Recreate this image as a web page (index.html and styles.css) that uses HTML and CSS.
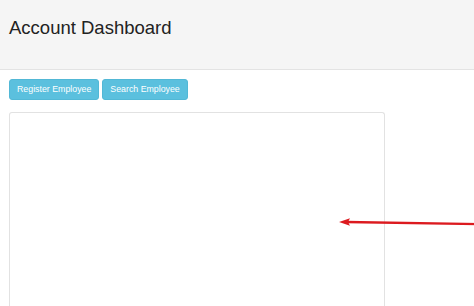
FILE: index.html
```html
<!DOCTYPE html>
<html>
<head>
<meta charset="utf-8">
<link rel="stylesheet" href="styles.css">
</head>
<body>
<header class="header">
  <h1 class="title">Account Dashboard</h1>
</header>
<main class="content">
  <div class="actions">
    <button class="btn">Register Employee</button>
    <button class="btn">Search Employee</button>
  </div>
  <section class="panel"></section>
</main>
<svg class="arrow" width="140" height="12" viewBox="0 0 140 12">
  <line x1="7" y1="5" x2="140" y2="7.2" stroke="#dc1a1f" stroke-width="2.3"/>
  <polygon points="0,5 11,1.3 9,5 11,8.7" fill="#dc1a1f"/>
</svg>
</body>
</html>
```
FILE: styles.css
```css
html, body {
  margin: 0;
  padding: 0;
  background: #ffffff;
  font-family: "Liberation Sans", Arial, sans-serif;
  overflow: hidden;
  height: 306px;
}
.header {
  background: #f5f5f5;
  border-bottom: 1px solid #e3e3e3;
  height: 70px;
  box-sizing: border-box;
  padding: 17px 9px 0;
}
.title {
  margin: 0;
  font-size: 18.5px;
  font-weight: normal;
  color: #222;
  line-height: 22px;
}
.content {
  padding: 9px 9px 0;
}
.actions {
  display: flex;
  gap: 3px;
}
.btn {
  background: #5bc0de;
  color: #fff;
  border: 1px solid #52b8d6;
  border-radius: 3px;
  font-family: "Liberation Sans", Arial, sans-serif;
  font-size: 8.8px;
  height: 21px;
  padding: 0 7px;
  line-height: 19px;
}
.panel {
  margin-top: 12px;
  width: 376px;
  height: 194px;
  box-sizing: border-box;
  border: 1px solid #e2e2e2;
  border-bottom: none;
  border-radius: 3px 3px 0 0;
  background: #fff;
}
.arrow {
  position: absolute;
  left: 339px;
  top: 217px;
}
```
